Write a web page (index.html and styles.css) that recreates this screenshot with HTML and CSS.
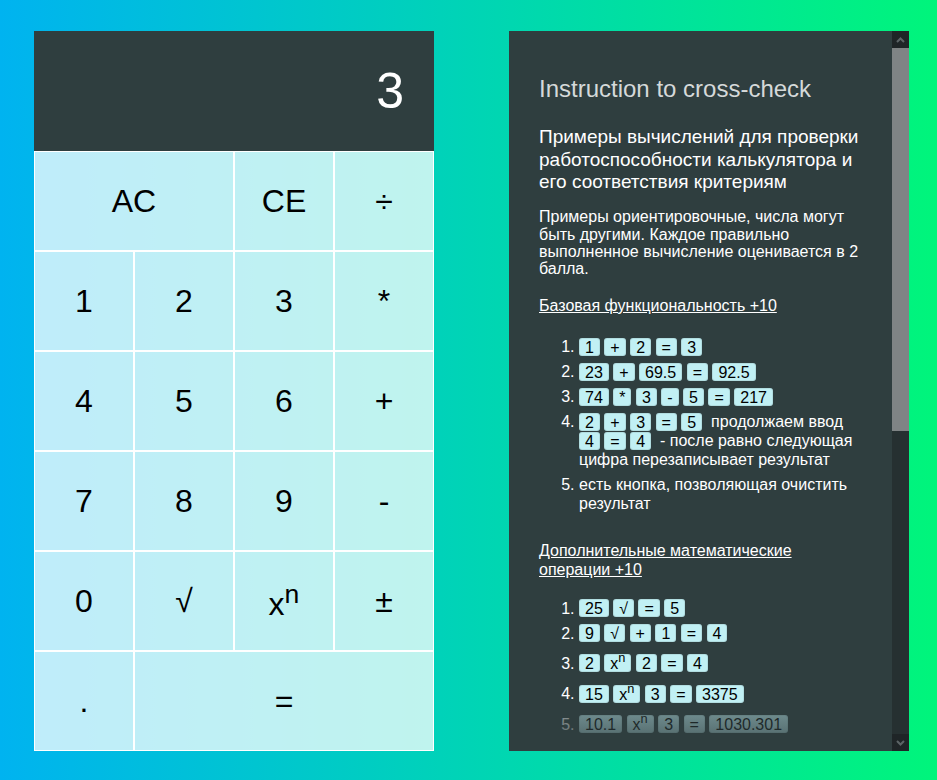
FILE: index.html
```html
<!DOCTYPE html>
<html lang="ru">
<head>
<meta charset="utf-8">
<title>Calculator</title>
<link rel="stylesheet" href="styles.css">
</head>
<body>
<div class="page">
  <div class="calc">
    <div class="display">3</div>
    <div class="keys">
      <button class="key wide2">AC</button>
      <button class="key">CE</button>
      <button class="key">÷</button>
      <button class="key">1</button>
      <button class="key">2</button>
      <button class="key">3</button>
      <button class="key">*</button>
      <button class="key">4</button>
      <button class="key">5</button>
      <button class="key">6</button>
      <button class="key">+</button>
      <button class="key">7</button>
      <button class="key">8</button>
      <button class="key">9</button>
      <button class="key">-</button>
      <button class="key">0</button>
      <button class="key">√</button>
      <button class="key">x<sup>n</sup></button>
      <button class="key">±</button>
      <button class="key">.</button>
      <button class="key wide3">=</button>
    </div>
  </div>

  <div class="panel">
    <div class="content">
      <h2 class="title">Instruction to cross-check</h2>
      <h3 class="subtitle">Примеры вычислений для проверки работоспособности калькулятора и его соответствия критериям</h3>
      <p class="note">Примеры ориентировочные, числа могут быть другими. Каждое правильно выполненное вычисление оценивается в 2 балла.</p>
      <p class="section"><a class="link">Базовая функциональность +10</a></p>
      <ol class="steps first">
        <li><span class="k">1</span> <span class="k">+</span> <span class="k">2</span> <span class="k">=</span> <span class="k">3</span></li>
        <li><span class="k">23</span> <span class="k">+</span> <span class="k">69.5</span> <span class="k">=</span> <span class="k">92.5</span></li>
        <li><span class="k">74</span> <span class="k">*</span> <span class="k">3</span> <span class="k">-</span> <span class="k">5</span> <span class="k">=</span> <span class="k">217</span></li>
        <li><span class="k">2</span> <span class="k">+</span> <span class="k">3</span> <span class="k">=</span> <span class="k">5</span>&nbsp; продолжаем ввод<br><span class="k">4</span> <span class="k">=</span> <span class="k">4</span>&nbsp; - после равно следующая цифра перезаписывает результат</li>
        <li>есть кнопка, позволяющая очистить результат</li>
      </ol>
      <p class="section gap"><a class="link">Дополнительные математические операции +10</a></p>
      <ol class="steps second">
        <li><span class="k">25</span> <span class="k">√</span> <span class="k">=</span> <span class="k">5</span></li>
        <li><span class="k">9</span> <span class="k">√</span> <span class="k">+</span> <span class="k">1</span> <span class="k">=</span> <span class="k">4</span></li>
        <li><span class="k">2</span> <span class="k">x<sup>n</sup></span> <span class="k">2</span> <span class="k">=</span> <span class="k">4</span></li>
        <li><span class="k">15</span> <span class="k">x<sup>n</sup></span> <span class="k">3</span> <span class="k">=</span> <span class="k">3375</span></li>
        <li><span class="k">10.1</span> <span class="k">x<sup>n</sup></span> <span class="k">3</span> <span class="k">=</span> <span class="k">1030.301</span></li>
      </ol>
      <div class="fade"></div>
    </div>
    <div class="scrollbar">
      <div class="sb-btn">
        <svg width="9" height="6" viewBox="0 0 9 6"><polyline points="1,5 4.5,1.5 8,5" fill="none" stroke="#5c6466" stroke-width="2"/></svg>
      </div>
      <div class="sb-thumb"></div>
      <div class="sb-track"></div>
      <div class="sb-btn">
        <svg width="9" height="6" viewBox="0 0 9 6"><polyline points="1,1 4.5,4.5 8,1" fill="none" stroke="#5c6466" stroke-width="2"/></svg>
      </div>
    </div>
  </div>
</div>
</body>
</html>
```
FILE: styles.css
```css
* { box-sizing: border-box; }

html, body {
  margin: 0;
  height: 100%;
}

body {
  background: linear-gradient(90deg, #00b3f0 0%, #00f57b 100%);
  font-family: "Liberation Sans", Arial, sans-serif;
  overflow: hidden;
}

.page {
  display: flex;
  gap: 75px;
  padding: 31px 0 0 34px;
}

.calc {
  width: 400px;
  height: 720px;
  display: flex;
  flex-direction: column;
}

.display {
  height: 120px;
  background: #2f3e3f;
  color: #fff;
  font-size: 50px;
  display: flex;
  align-items: center;
  justify-content: flex-end;
  padding-right: 30px;
}

.keys {
  display: grid;
  grid-template-columns: repeat(4, 100px);
  grid-auto-rows: 100px;
}

.key {
  border: 1px solid #fff;
  background: rgba(255, 255, 255, 0.75);
  font-family: "Liberation Sans", Arial, sans-serif;
  font-size: 32px;
  color: #000;
  padding: 0;
  margin: 0;
}

.key sup {
  font-size: 0.83em;
}

.wide2 { grid-column: span 2; }
.wide3 { grid-column: span 3; }

.panel {
  width: 400px;
  height: 720px;
  background: #2f3e3f;
  display: flex;
}

.content {
  flex: 1;
  min-width: 0;
  overflow: hidden;
  padding: 44px 30px 0 30px;
  color: #fff;
  position: relative;
}

.title {
  margin: 0;
  font-size: 24px;
  font-weight: normal;
  color: #d5d9d9;
}

.subtitle {
  margin: 23px 0 0;
  font-size: 19px;
  font-weight: normal;
  line-height: 22.7px;
}

.note {
  margin: 14px 0 0;
  font-size: 16px;
  line-height: 17.4px;
}

.section {
  margin: 19px 0 0;
  font-size: 16px;
  line-height: 18.6px;
}

.section.gap {
  margin-top: 29px;
}

.link {
  color: #fff;
  text-decoration: underline;
}

.steps {
  margin: 22px 0 0;
  padding-left: 40px;
  font-size: 16px;
  line-height: 19px;
}

.steps.second {
  margin-top: 19px;
}

.steps li {
  margin-bottom: 6px;
}

.k {
  background: #c1f0f4;
  color: #000;
  padding: 0.5px 6px;
  border-radius: 3px;
  box-shadow: inset 0 0 0 1px rgba(0, 0, 0, 0.08);
}

.k sup {
  font-size: 0.8em;
}

.fade {
  position: absolute;
  left: 0;
  right: 0;
  bottom: 0;
  height: 45px;
  background: linear-gradient(rgba(47, 62, 63, 0.5), rgba(47, 62, 63, 0.85));
}

.scrollbar {
  width: 17px;
  display: flex;
  flex-direction: column;
  background: #263031;
}

.sb-btn {
  height: 17px;
  background: #1f2527;
  display: flex;
  align-items: center;
  justify-content: center;
}

.sb-thumb {
  height: 383px;
  background: #7f8485;
}

.sb-track {
  flex: 1;
}
```
